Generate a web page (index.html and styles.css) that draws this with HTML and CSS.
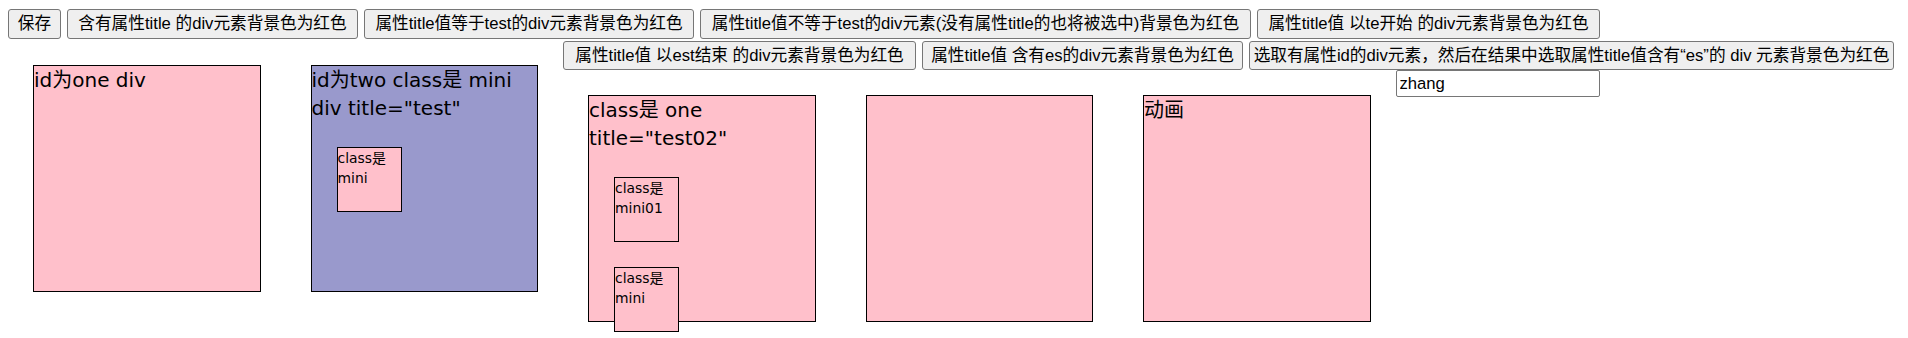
FILE: index.html
```html
<!DOCTYPE html>
<html lang="zh">
<head>
<meta charset="utf-8">
<title>jQuery 属性选择器</title>
<link rel="stylesheet" href="styles.css">
</head>
<body>
<div class="row1">
  <button class="btn w1">保存</button>
  <button class="btn w2">含有属性title 的div元素背景色为红色</button>
  <button class="btn w3">属性title值等于test的div元素背景色为红色</button>
  <button class="btn w4">属性title值不等于test的div元素(没有属性title的也将被选中)背景色为红色</button>
  <button class="btn w5">属性title值 以te开始 的div元素背景色为红色</button>
</div>
<div class="main">
  <div class="box pink">id为one div</div>
  <div class="box lavender">id为two class是 mini div title="test"<div class="mini">class是 mini</div></div>
  <div class="col">
    <div class="row2">
      <button class="btn w6">属性title值 以est结束 的div元素背景色为红色</button>
      <button class="btn w7">属性title值 含有es的div元素背景色为红色</button>
      <button class="btn w8">选取有属性id的div元素，然后在结果中选取属性title值含有“es”的 div 元素背景色为红色</button>
    </div>
    <div class="lower">
      <div class="box pink">class是 one title="test02"<div class="mini">class是 mini01</div><div class="mini">class是 mini</div></div>
      <div class="box pink"></div>
      <div class="box pink">动画</div>
      <input class="field" type="text" value="zhang">
    </div>
  </div>
</div>
</body>
</html>
```

FILE: styles.css
```css
html, body {
  background: #ffffff;
}

body {
  margin: 8px;
  color: #000000;
  font-family: "DejaVu Sans", "Noto Sans CJK SC", sans-serif;
}

.row1 {
  display: flex;
  align-items: center;
  gap: 6px;
  height: 32px;
}

.row2 {
  display: flex;
  align-items: center;
  gap: 6px;
  height: 30px;
}

.btn {
  box-sizing: border-box;
  height: 30px;
  padding: 0;
  margin: 0;
  border: 1px solid #767676;
  border-radius: 3px;
  background: #efefef;
  color: #000000;
  font-family: "Liberation Sans", "Noto Sans CJK SC", sans-serif;
  font-size: 16.67px;
  line-height: 28px;
  text-align: center;
  white-space: nowrap;
  flex: none;
}

.row2 .btn {
  height: 29px;
  line-height: 27px;
}

.w1 { width: 53px; }
.w2 { width: 291px; }
.w3 { width: 330px; }
.w4 { width: 551px; }
.w5 { width: 343px; }
.w6 { width: 353px; }
.w7 { width: 321px; }
.w8 { width: 645px; }

.main {
  display: flex;
  align-items: flex-start;
}

.col {
  display: flex;
  flex-direction: column;
}

.lower {
  display: flex;
  align-items: flex-start;
}

.box {
  box-sizing: border-box;
  flex: none;
  width: 227.5px;
  height: 227px;
  margin: 25px;
  border: 1px solid #000000;
  font-size: 20px;
  line-height: 28px;
}

.pink {
  background: #ffc0cb;
}

.lavender {
  background: #9999cc;
}

.mini {
  box-sizing: border-box;
  width: 65px;
  height: 65px;
  margin: 25px;
  border: 1px solid #000000;
  background: #ffc0cb;
  font-size: 13.9px;
  line-height: 20px;
}

.field {
  box-sizing: border-box;
  flex: none;
  width: 204px;
  height: 27px;
  margin: 0;
  padding: 0 3px;
  border: 1px solid #767676;
  border-radius: 2px;
  background: #ffffff;
  color: #000000;
  font-family: "Liberation Sans", "Noto Sans CJK SC", sans-serif;
  font-size: 16.67px;
}
```
